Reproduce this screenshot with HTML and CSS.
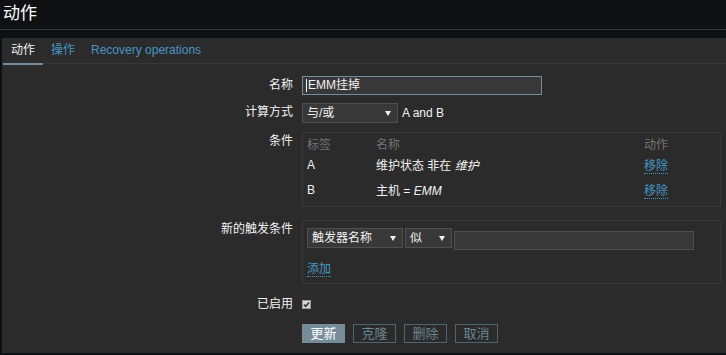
FILE: index.html
```
<!DOCTYPE html>
<html>
<head>
<meta charset="utf-8">
<title>动作</title>
<link rel="stylesheet" href="styles.css">
</head>
<body>

<div class="header">
	<h1 class="title">动作</h1>
</div>

<div class="tabs">
	<ul class="tab-nav">
		<li class="tab active">动作</li>
		<li class="tab"><a>操作</a></li>
		<li class="tab"><a>Recovery operations</a></li>
	</ul>

	<div class="form">
		<div class="row row-name">
			<label class="label">名称</label>
			<div class="field">
				<div class="input input-name focused"><span class="caret"></span>EMM挂掉</div>
			</div>
		</div>

		<div class="row row-calc">
			<label class="label">计算方式</label>
			<div class="field">
				<div class="select select-calc">与/或<span class="arrow"></span></div>
				<span class="expr">A and B</span>
			</div>
		</div>

		<div class="row row-cond">
			<label class="label">条件</label>
			<div class="field">
				<div class="box box-cond">
					<table class="cond-table">
						<tr>
							<th class="col-tag">标签</th>
							<th>名称</th>
							<th class="col-act">动作</th>
						</tr>
						<tr>
							<td>A</td>
							<td>维护状态 非在 <em>维护</em></td>
							<td><a class="link">移除</a></td>
						</tr>
						<tr>
							<td>B</td>
							<td>主机 = <em>EMM</em></td>
							<td><a class="link">移除</a></td>
						</tr>
					</table>
				</div>
			</div>
		</div>

		<div class="row row-new">
			<label class="label">新的触发条件</label>
			<div class="field">
				<div class="box box-new">
					<div class="new-line">
						<div class="select select-type">触发器名称<span class="arrow"></span></div>
						<div class="select select-op">似<span class="arrow"></span></div>
						<div class="input input-value"></div>
					</div>
					<a class="link add">添加</a>
				</div>
			</div>
		</div>

		<div class="row row-enabled">
			<label class="label">已启用</label>
			<div class="field">
				<span class="checkbox"><svg width="7" height="7" viewBox="0 0 7 7"><path d="M1 3.6 L2.8 5.4 L6 1.4" fill="none" stroke="#333" stroke-width="1.6"/></svg></span>
			</div>
		</div>

		<div class="row row-buttons">
			<div class="label"></div>
			<div class="field buttons">
				<button class="btn primary">更新</button>
				<button class="btn alt">克隆</button>
				<button class="btn alt">删除</button>
				<button class="btn alt">取消</button>
			</div>
		</div>
	</div>
</div>

</body>
</html>
```

FILE: styles.css
```
body{
	margin:0;
	background:#0e1012;
	color:#f2f2f2;
	font:12px "Liberation Sans","Noto Sans CJK SC",sans-serif;
}
.header{
	height:29px;
	border-bottom:1px solid #383838;
	margin-bottom:8px;
}
.title{
	margin:0;
	padding-left:3px;
	font-size:17px;
	font-weight:normal;
	line-height:27px;
	color:#fff;
}
.tabs{
	margin-left:2px;
	height:315px;
	background:#2b2b2b;
}
.tab-nav{
	list-style:none;
	margin:0;
	padding:0 0 0 1px;
	display:flex;
	height:25px;
	border-bottom:1px solid #383838;
}
.tab{
	padding:0 8px;
	line-height:25px;
}
.tab a{
	color:#4796c4;
}
.tab.active{
	color:#f2f2f2;
	box-shadow:inset 0 -2px 0 #768d99;
	height:27px;
}
.form{
	padding-top:12px;
}
.row{
	display:flex;
	align-items:flex-start;
}
.label{
	width:291px;
	flex:none;
	text-align:right;
	line-height:19px;
	padding-right:9px;
	color:#f2f2f2;
}
.field{
	display:flex;
	align-items:center;
	flex:1;
}
.row-calc{ margin-top:8px; }
.row-cond{ margin-top:9px; }
.row-new{ margin-top:13px; }
.row-enabled{ margin-top:11px; }
.row-buttons{ margin-top:10px; }

.input{
	box-sizing:border-box;
	height:19px;
	background:#383838;
	border:1px solid #4f4f4f;
	line-height:17px;
	padding-left:5px;
	color:#f2f2f2;
}
.input-name{
	width:240px;
	position:relative;
}
.focused{
	border-color:#768d99;
}
.caret{
	position:absolute;
	left:3px;
	top:2px;
	width:1px;
	height:13px;
	background:#f2f2f2;
}
.select{
	box-sizing:border-box;
	position:relative;
	height:20px;
	background:#383838;
	border:1px solid #4f4f4f;
	line-height:18px;
	padding-left:4px;
	color:#f2f2f2;
}
.arrow{
	position:absolute;
	right:6px;
	top:7px;
	width:0;
	height:0;
	border-left:3px solid transparent;
	border-right:3px solid transparent;
	border-top:5px solid #f2f2f2;
}
.select-calc{ width:96px; }
.expr{ margin-left:4px; }

.box{
	box-sizing:border-box;
	width:419px;
	border:1px solid #383838;
}
.box-cond{
	padding:5px 4px 4px;
	height:75px;
}
.cond-table{
	width:100%;
	border-collapse:collapse;
}
.cond-table th{
	text-align:left;
	font-weight:normal;
	color:#737373;
	height:14px;
	line-height:14px;
	padding:0;
}
.cond-table td{
	height:25px;
	padding:0;
}
.col-tag{ width:69px; }
.col-act{ width:72px; }
em{ font-style:italic; }
.link{
	color:#4796c4;
	border-bottom:1px dotted #4796c4;
	cursor:pointer;
}
.box-new{
	height:64px;
	padding:7px 4px 0;
}
.new-line{
	display:flex;
	align-items:flex-start;
	gap:2px;
}
.select-type{ width:96px; }
.select-op{ width:47px; }
.input-value{
	width:240px;
	margin-top:3px;
}
.add{
	display:inline-block;
	margin-top:12px;
	line-height:14px;
}
.checkbox{
	box-sizing:border-box;
	display:flex;
	align-items:center;
	justify-content:center;
	width:9px;
	height:9px;
	margin-top:5px;
	background:#d6d6d6;
	border:1px solid #9a9a9a;
}
.buttons{
	gap:8px;
}
.btn{
	box-sizing:border-box;
	height:19px;
	width:43px;
	padding:0;
	font:13px "Liberation Sans","Noto Sans CJK SC",sans-serif;
	line-height:17px;
	border:1px solid #768d99;
	background:transparent;
	color:#768d99;
}
.btn.primary{
	background:#768d99;
	color:#fff;
}
.btn.alt{
	border-color:#4e6470;
	color:#6d8591;
}
```
